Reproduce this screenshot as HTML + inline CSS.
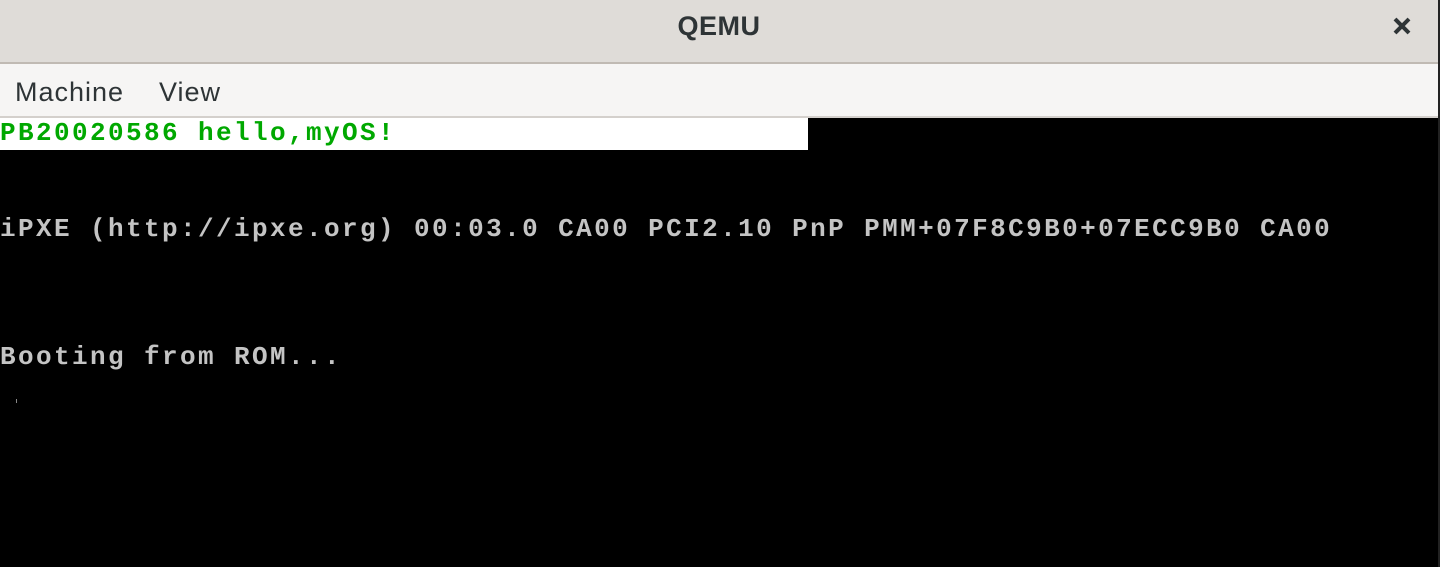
<!DOCTYPE html>
<html><head><meta charset="utf-8"><style>
html,body{margin:0;padding:0;width:1440px;height:567px;overflow:hidden;background:#000;}
.title{position:absolute;left:0;top:0;width:1438px;height:62px;background:#dfdcd8;border-bottom:2px solid #c0bab3;}
.title .t{position:absolute;left:0;right:0;top:0;font:bold 27px "Liberation Sans",sans-serif;line-height:52px;text-align:center;color:#2e3436;letter-spacing:0.5px;}
.title .x{position:absolute;left:1389px;top:13px;}
.menu{position:absolute;left:0;top:64px;width:1438px;height:52px;background:#f6f5f4;border-bottom:2px solid #d4d0cc;}
.menu span{position:absolute;top:13px;font:27px "Liberation Sans",sans-serif;color:#2e3436;letter-spacing:1px;}
.edge{position:absolute;left:1438px;top:0;width:2px;height:567px;background:#222;}
.white{position:absolute;left:0;top:118px;width:808px;height:32px;background:#fff;}
.con{position:absolute;left:0;font:bold 26px "Liberation Mono",monospace;line-height:30px;letter-spacing:2.4px;white-space:pre;}
</style></head><body>
<div class="title"><div class="t">QEMU</div>
<svg class="x" width="26" height="26" viewBox="0 0 26 26"><path d="M6 6L20 20M20 6L6 20" stroke="#2e3436" stroke-width="4"/></svg></div>
<div class="menu"><span style="left:15px">Machine</span><span style="left:159px">View</span></div>
<div class="white"></div>
<div class="con" style="top:118px;color:#00a800">PB20020586 hello,myOS!</div>
<div class="con" style="top:214px;color:#c4c4c4">iPXE (http://ipxe.org) 00:03.0 CA00 PCI2.10 PnP PMM+07F8C9B0+07ECC9B0 CA00</div>
<div class="con" style="top:342px;color:#c4c4c4">Booting from ROM...</div>
<div style="position:absolute;left:16px;top:399px;width:1px;height:4px;background:#888"></div>
<div class="edge"></div>
</body></html>
